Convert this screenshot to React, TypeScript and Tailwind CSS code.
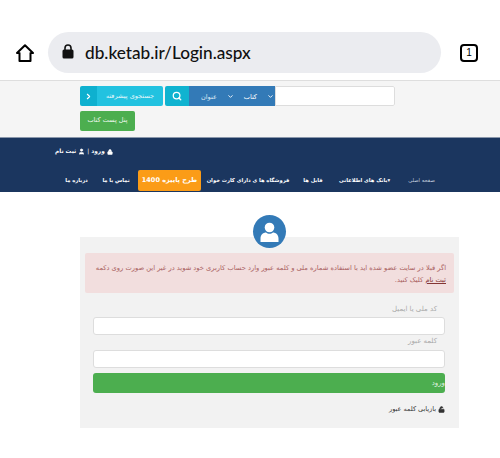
import { Search, ChevronDown, ChevronRight, Lock, User, Unlock } from "lucide-react";

const font = "font-['DejaVu_Sans',sans-serif]";

function AddressBar() {
  return (
    <div className="h-[81px] bg-white pt-8 pl-[48px] flex items-start border-b border-[#dedede]">
      <svg width="20" height="20" viewBox="0 0 20 20" className="absolute left-[15px] top-[43px]">
        <path d="M10 2.200 L18 10 H15.500 V18 H4.500 V10 H2 Z" fill="none" stroke="#000" strokeWidth="2" strokeLinejoin="round" />
      </svg>
      <div className="w-[393px] h-[41px] rounded-full bg-[#ebecf0] flex items-center pl-[14px] gap-[11px]">
        <svg width="12" height="15" viewBox="0 0 12 15" className="-mt-0.5">
          <path d="M3 6V4a3 3 0 0 1 6 0v2" fill="none" stroke="#111" strokeWidth="1.6" />
          <rect x="0.5" y="5.5" width="11" height="9" rx="1.5" fill="#111" />
        </svg>
        <span className="font-['Lato',sans-serif] font-medium text-[17.2px] text-[#111] leading-none">db.ketab.ir/Login.aspx</span>
      </div>
      <div className="ml-[19px] mt-[12px] w-[18px] h-[18px] border-2 border-black rounded-[4px] flex items-center justify-center text-[10px] leading-none text-black font-['Liberation_Sans',sans-serif]">1</div>
    </div>
  );
}

function SearchRow() {
  return (
    <div className="h-[56px] bg-[#f5f5f5] pl-[80px] pt-[5px]">
      <div className="flex h-[20px] gap-[2px]">
        <div className="flex w-[83px] rounded-[2px] overflow-hidden">
          <div className="w-[17px] bg-[#0eb0cf] flex items-center justify-center">
            <ChevronRight size={9} strokeWidth={3} className="text-white" />
          </div>
          <div className={`flex-1 bg-[#22c2e0] text-[#e4f7fb] text-[6.5px] pt-[2px] flex items-center justify-center ${font}`}>جستجوی پیشرفته</div>
        </div>
        <div className="flex w-[230px] rounded-[2px] overflow-hidden">
          <div className="w-[24px] bg-[#10b3d0] flex items-center justify-center">
            <Search size={10} strokeWidth={3} className="text-white" />
          </div>
          <div className={`w-[86px] bg-[#337ab7] text-white text-[6.5px] flex items-center justify-between pl-[12px] pr-[1px] ${font}`}>
            <span className="text-[#dce9f5] pt-[3px]">عنوان</span>
            <ChevronDown size={7} strokeWidth={3} />
            <span className="pt-[3px]">کتاب</span>
            <ChevronDown size={7} strokeWidth={3} />
          </div>
          <div className="flex-1 bg-white border border-[#dddddd] rounded-r-[2px]" />
        </div>
      </div>
      <button className={`mt-[5px] block w-[55px] h-[20px] rounded-[2px] bg-[#4cae4f] text-[#eef8ee] text-[6.5px] ${font}`}>پنل پست کتاب</button>
    </div>
  );
}

function NavBar() {
  return (
    <div className={`h-[55px] bg-[#1b365f] border-t border-[#8a97ab] pt-[8px] text-white ${font}`}>
      <div className="flex items-center pl-[55px] gap-[2px] text-[5.8px] font-bold h-[11px]">
        <span>ثبت نام</span>
        <User size={7} fill="white" />
        <span className="font-normal">|</span>
        <span>ورود</span>
        <Lock size={6} fill="white" />
      </div>
      <nav className="flex items-center mt-[13px] text-[5.2px] font-bold h-[21px] whitespace-nowrap">
        <span className="ml-[66px] w-[21px] flex justify-center">درباره ما</span>
        <span className="ml-[16px] w-[26px] flex justify-center">تماس با ما</span>
        <button className="ml-[9px] w-[63px] h-[21px] rounded-[2px] bg-[#fb9c17] text-[6.5px]">طرح پاییزه 1400</button>
        <span className="ml-[8px] w-[78px] flex justify-center">فروشگاه ها ی دارای کارت خوان</span>
        <span className="ml-[17px] w-[18px] flex justify-center">فایل ها</span>
        <span className="ml-[17px] w-[51px] flex justify-center">بانک های اطلاعاتی▾</span>
        <span className="ml-[16px] w-[31px] flex justify-center font-normal text-[#c3cedd]">صفحه اصلی</span>
      </nav>
    </div>
  );
}

function LoginCard() {
  return (
    <div className={`relative ml-[80px] mt-[45px] w-[379px] h-[191px] bg-[#f2f2f2] ${font}`}>
      <div className="absolute left-[173px] -top-[22px] w-[33px] h-[33px] rounded-full bg-[#337ab7] flex items-center justify-center">
        <svg width="19" height="20" viewBox="0 0 19 20" fill="white">
          <circle cx="9.500" cy="5.500" r="4.800" />
          <path d="M0.500 20v-3.500C0.500 12.500 3.500 10.500 6 10.500c1 1 2.200 1.300 3.500 1.300s2.500-.3 3.500-1.300c2.500 0 5.500 2 5.500 6V20z" />
        </svg>
      </div>
      <div className="pt-4 px-[5px]">
        <div dir="rtl" className="h-[40px] rounded-[2px] bg-[#f2dede] text-[#a9605e] text-[6.7px] leading-[12px] px-2 pt-[9px] whitespace-nowrap overflow-hidden">
          <div>اگر قبلا در سایت عضو شده اید با استفاده شماره ملی و کلمه عبور وارد حساب کاربری خود شوید در غیر این صورت روی دکمه</div>
          <div><span className="underline text-[#843534]">ثبت نام</span> کلیک کنید.</div>
        </div>
      </div>
      <div className="pl-[13px] pr-[14px]">
        <div dir="rtl" className="text-[7px] text-[#aaaaaa] pr-2 mt-[9px] h-[14px] leading-[14px]">کد ملی یا ایمیل</div>
        <div className="mt-[1px] h-[18px] bg-white border border-[#dddddd] rounded-[3px]" />
        <div dir="rtl" className="text-[7px] text-[#aaaaaa] pr-2 h-[13px] leading-[13px]">کلمه عبور</div>
        <div className="mt-[2px] h-[18px] bg-white border border-[#dddddd] rounded-[3px]" />
        <button dir="rtl" className="mt-[5px] block w-full h-[20px] rounded-[3px] bg-[#4cae4f] text-[#dff0df] text-[7px] text-right">ورود</button>
        <div dir="rtl" className="mt-[12px] flex items-center gap-[2px] text-[6.5px] text-[#333333]">
          <Unlock size={7} fill="#333333" />
          <span>بازیابی کلمه عبور</span>
        </div>
      </div>
    </div>
  );
}

export default function App() {
  return (
    <div className="relative w-[500px] h-[458px] bg-white overflow-hidden">
      <AddressBar />
      <SearchRow />
      <NavBar />
      <LoginCard />
    </div>
  );
}
